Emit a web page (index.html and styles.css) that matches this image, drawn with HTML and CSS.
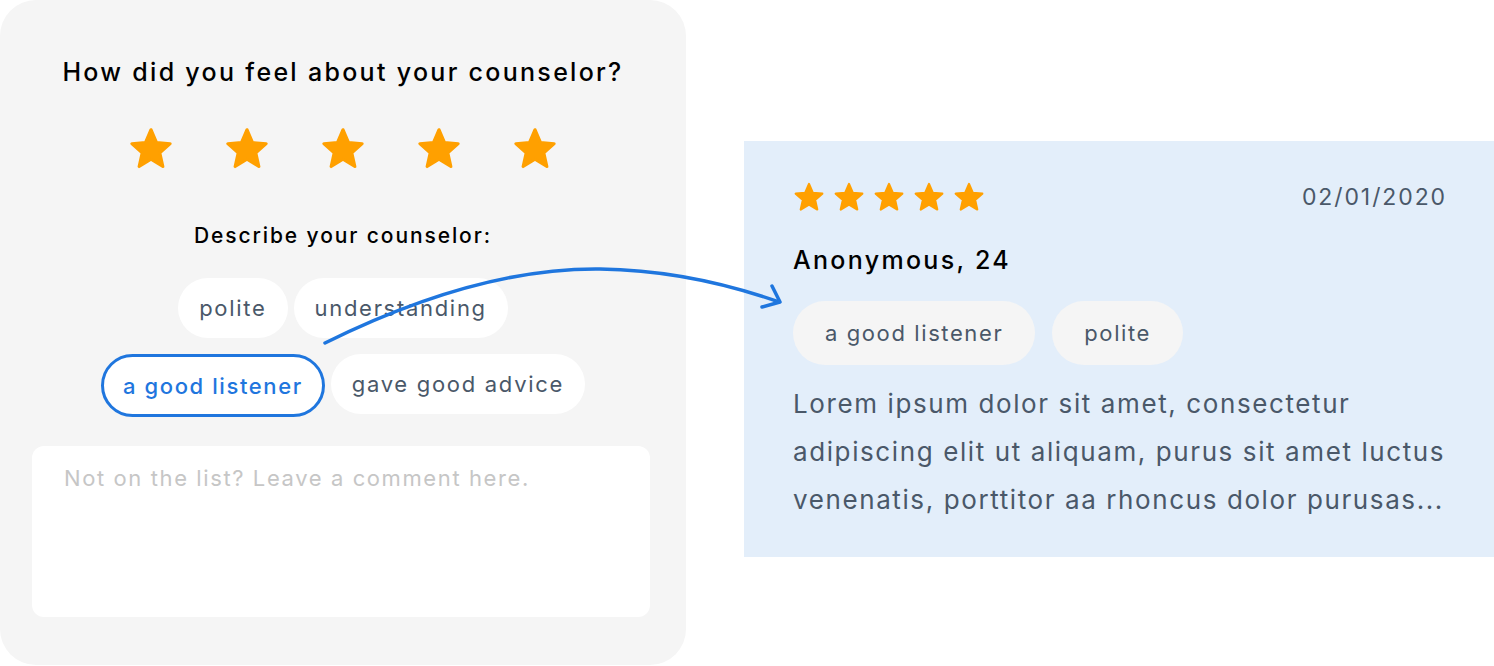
FILE: index.html
```html
<!DOCTYPE html>
<html lang="en">
<head>
<meta charset="utf-8">
<title>Counselor feedback</title>
<link rel="stylesheet" href="styles.css">
</head>
<body>
<svg width="0" height="0" class="defs">
  <defs>
    <symbol id="star" viewBox="0 0 24 24">
      <polygon points="12,2.2 14.9,8.9 22,9.5 16.6,14.3 18.2,21.4 12,17.6 5.8,21.4 7.4,14.3 2,9.5 9.1,8.9" fill="currentColor" stroke="currentColor" stroke-width="1.6" stroke-linejoin="round"/>
    </symbol>
  </defs>
</svg>
<main class="page">
  <section class="survey">
    <h1 class="survey-title">How did you feel about your counselor?</h1>
    <div class="survey-stars">
      <svg class="star-lg"><use href="#star"/></svg>
      <svg class="star-lg"><use href="#star"/></svg>
      <svg class="star-lg"><use href="#star"/></svg>
      <svg class="star-lg"><use href="#star"/></svg>
      <svg class="star-lg"><use href="#star"/></svg>
    </div>
    <h2 class="survey-sub">Describe your counselor:</h2>
    <div class="chips">
      <span class="chip">polite</span>
      <span class="chip">understanding</span>
      <span class="chip chip-selected">a good listener</span>
      <span class="chip">gave good advice</span>
    </div>
    <div class="comment">Not on the list? Leave a comment here.</div>
  </section>

  <section class="review">
    <div class="review-head">
      <div class="review-stars">
        <svg class="star-sm"><use href="#star"/></svg>
        <svg class="star-sm"><use href="#star"/></svg>
        <svg class="star-sm"><use href="#star"/></svg>
        <svg class="star-sm"><use href="#star"/></svg>
        <svg class="star-sm"><use href="#star"/></svg>
      </div>
      <span class="review-date">02/01/2020</span>
    </div>
    <h3 class="review-name">Anonymous, 24</h3>
    <div class="review-tags">
      <span class="rtag">a good listener</span>
      <span class="rtag">polite</span>
    </div>
    <p class="review-text">Lorem ipsum dolor sit amet, consectetur<br>adipiscing elit ut aliquam, purus sit amet luctus<br>venenatis, porttitor aa rhoncus dolor purusas...</p>
  </section>

  <svg class="arrow" width="1494" height="666" viewBox="0 0 1494 666">
    <path d="M325,343 C420,296 515,268 600,269 C670,270 728,284 779,302" fill="none" stroke="#1f76de" stroke-width="3.5" stroke-linecap="round"/>
    <path d="M772,286 L780,302 L762,307" fill="none" stroke="#1f76de" stroke-width="3.5" stroke-linecap="round" stroke-linejoin="round"/>
  </svg>
</main>
</body>
</html>
```

FILE: styles.css
```css
* { box-sizing: border-box; }

html, body {
  margin: 0;
  padding: 0;
  background: #ffffff;
}

body {
  font-family: "Inter", "Noto Sans", sans-serif;
  color: #000;
  width: 1494px;
  height: 666px;
  overflow: hidden;
}

.defs { position: absolute; }

.page {
  position: relative;
  display: flex;
  align-items: flex-start;
  width: 1494px;
  height: 666px;
}

/* Left survey card */
.survey {
  width: 686px;
  height: 665px;
  background: #f5f5f5;
  border-radius: 36px;
  padding-top: 57px;
  display: flex;
  flex-direction: column;
  align-items: center;
  flex-shrink: 0;
}

.survey-title {
  margin: 0;
  font-size: 25px;
  line-height: 30px;
  font-weight: 500;
  letter-spacing: 2.3px;
  color: #000;
}

.survey-stars {
  margin-top: 38px;
  display: flex;
  gap: 50px;
  color: #ffa000;
}

.star-lg {
  width: 46px;
  height: 47px;
  display: block;
}

.survey-sub {
  margin: 51px 0 0;
  font-size: 21px;
  line-height: 26px;
  font-weight: 500;
  letter-spacing: 1.9px;
  color: #000;
}

.chips {
  margin-top: 29px;
  width: 500px;
  display: flex;
  flex-wrap: wrap;
  justify-content: center;
  column-gap: 6px;
  row-gap: 16px;
}

.chip {
  height: 60px;
  padding: 0 21px;
  background: #ffffff;
  border-radius: 30px;
  display: inline-flex;
  align-items: center;
  font-size: 22px;
  letter-spacing: 1.7px;
  color: #4a5869;
}

.chip-selected {
  height: 63px;
  border: 3px solid #1f76de;
  padding: 0 19px;
  color: #1f76de;
  font-weight: 500;
  letter-spacing: 1.6px;
  border-radius: 32px;
}

.comment {
  margin-top: 29px;
  align-self: flex-start;
  margin-left: 32px;
  width: 618px;
  height: 171px;
  background: #ffffff;
  border-radius: 12px;
  padding: 18px 32px;
  font-size: 22px;
  line-height: 28px;
  letter-spacing: 1.6px;
  color: #c6c6c6;
}

/* Right review card */
.review {
  margin-left: 58px;
  margin-top: 141px;
  width: 750px;
  height: 416px;
  background: #e3eefa;
  padding: 40px 49px 0 49px;
  flex-shrink: 0;
}

.review-head {
  display: flex;
  justify-content: space-between;
  align-items: center;
  height: 32px;
}

.review-stars {
  display: flex;
  gap: 8px;
  color: #ffa000;
}

.star-sm {
  width: 32px;
  height: 32px;
  display: block;
}

.review-date {
  font-size: 23px;
  color: #4a5869;
  letter-spacing: 1.9px;
  margin-right: -2px;
}

.review-name {
  margin: 32px 0 0;
  font-size: 25px;
  line-height: 30px;
  font-weight: 500;
  letter-spacing: 2.3px;
  color: #000;
}

.review-tags {
  margin-top: 26px;
  display: flex;
  gap: 17px;
}

.rtag {
  height: 64px;
  padding: 0 32px;
  background: #f5f5f5;
  border-radius: 32px;
  display: inline-flex;
  align-items: center;
  font-size: 22px;
  letter-spacing: 1.6px;
  color: #4a5869;
}

.review-text {
  margin: 15px 0 0;
  font-size: 26px;
  line-height: 48px;
  letter-spacing: 1.6px;
  color: #4a5869;
  white-space: nowrap;
}

/* Connector arrow overlay */
.arrow {
  position: absolute;
  left: 0;
  top: 0;
  pointer-events: none;
}
```
